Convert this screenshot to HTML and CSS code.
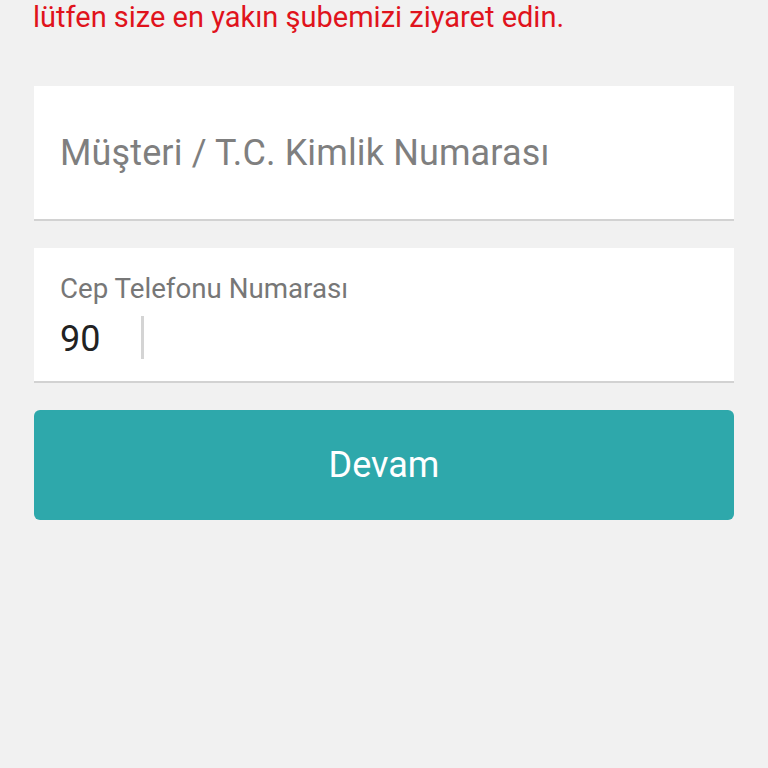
FILE: index.html
```html
<!DOCTYPE html>
<html lang="tr">
<head>
<meta charset="utf-8">
<link rel="stylesheet" href="styles.css">
</head>
<body>
<div class="page">
  <p class="notice">lütfen size en yakın şubemizi ziyaret edin.</p>
  <div class="field field-single">
    <span class="placeholder">Müşteri / T.C. Kimlik Numarası</span>
  </div>
  <div class="field field-phone">
    <span class="label">Cep Telefonu Numarası</span>
    <div class="phone-row">
      <span class="prefix">90</span>
      <span class="divider"></span>
    </div>
  </div>
  <button class="btn">Devam</button>
</div>
</body>
</html>
```
FILE: styles.css
```css
html, body {
  margin: 0;
  padding: 0;
  background: #f1f1f1;
  font-family: Roboto, "Liberation Sans", sans-serif;
}
.page {
  display: flex;
  flex-direction: column;
  padding: 0 34px 0 34px;
  width: 700px;
}
.notice {
  margin: 0;
  color: #e0131c;
  font-size: 29px;
  line-height: 34px;
  margin-left: -1px;
  height: 36px;
  white-space: nowrap;
}
.field {
  background: #fff;
  border-bottom: 2px solid #d2d2d2;
  box-sizing: border-box;
  display: flex;
  flex-direction: column;
  padding-left: 26px;
}
.field-single {
  margin-top: 50px;
  height: 135px;
  justify-content: center;
}
.placeholder {
  color: #7f7f7f;
  font-size: 36px;
  line-height: 40px;
  letter-spacing: 0.13px;
  white-space: nowrap;
}
.field-phone {
  margin-top: 27px;
  height: 135px;
  padding-top: 26px;
}
.label {
  color: #777;
  font-size: 27.7px;
  line-height: 30px;
  white-space: nowrap;
}
.phone-row {
  display: flex;
  align-items: flex-start;
  margin-top: 12px;
  height: 43px;
}
.prefix {
  color: #222;
  font-size: 36px;
  line-height: 42px;
  padding-top: 2px;
  width: 81px;
}
.divider {
  width: 3px;
  height: 43px;
  background: #d4d4d4;
}
.btn {
  margin-top: 27px;
  height: 110px;
  border: none;
  border-radius: 6px;
  background: #2ea8ab;
  color: #fff;
  font-family: Roboto, "Liberation Sans", sans-serif;
  font-size: 36px;
  padding: 0;
}
```
